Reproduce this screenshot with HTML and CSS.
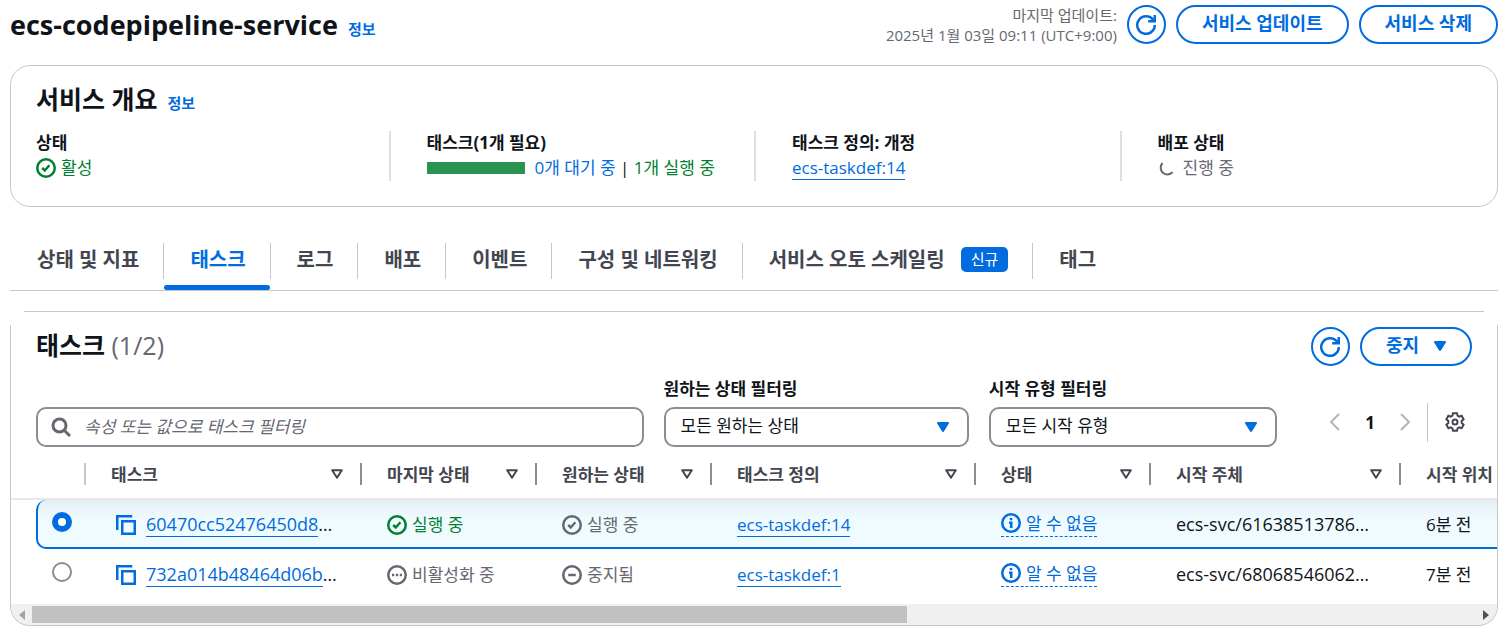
FILE: index.html
```html
<!DOCTYPE html>
<html lang="ko">
<head>
<meta charset="utf-8">
<meta name="viewport" content="width=device-width, initial-scale=1">
<title>ecs-codepipeline-service</title>
<link rel="stylesheet" href="styles.css">
</head>
<body>
<svg class="sprite" aria-hidden="true">
  <symbol id="i-refresh" viewBox="0 0 16 16"><path d="M15 8A7 7 0 1 1 13.700 4M9.700 5H15V0"/></symbol>
  <symbol id="i-check" viewBox="0 0 16 16"><circle cx="8" cy="8" r="7"/><path d="M5 8l2 2 3.7-4.2"/></symbol>
  <symbol id="i-dots" viewBox="0 0 16 16"><circle cx="8" cy="8" r="7"/><path d="M4 8h1.8M7.1 8h1.8M10.2 8H12"/></symbol>
  <symbol id="i-minus" viewBox="0 0 16 16"><circle cx="8" cy="8" r="7"/><path d="M5 8h6"/></symbol>
  <symbol id="i-info" viewBox="0 0 16 16"><circle cx="8" cy="8" r="7"/><path d="M6.4 7.7H8.2V12M8 4v1.8"/></symbol>
  <symbol id="i-copy" viewBox="0 0 16 16"><path d="M13 1H1v11M5 5h10v10H5z"/></symbol>
  <symbol id="i-down" viewBox="0 0 12 10"><path d="M1 1h10L6 9z"/></symbol>
  <symbol id="i-sort" viewBox="0 0 12 10"><path d="M1.200 1.200h9.600L6 8.800z"/></symbol>
</svg>
<main class="page">
  <header class="page-header">
    <h1 class="title">ecs-codepipeline-service</h1>
    <a class="info" href="#">정보</a>
    <p class="updated">마지막 업데이트:<br>2025년 1월 03일 09:11 (UTC+9:00)</p>
    <div class="actions">
      <button class="btn btn-round" type="button" aria-label="새로 고침"><svg class="icon"><use href="#i-refresh"/></svg></button>
      <button class="btn" type="button">서비스 업데이트</button>
      <button class="btn" type="button">서비스 삭제</button>
    </div>
  </header>

  <section class="overview">
    <div class="overview-head"><h2 class="heading">서비스 개요</h2><a class="info" href="#">정보</a></div>
    <dl class="facts">
      <div class="fact"><dt>상태</dt><dd class="status ok"><svg class="icon"><use href="#i-check"/></svg>활성</dd></div>
      <div class="fact"><dt>태스크(1개 필요)</dt><dd class="counts"><span class="bar"></span><span><span class="pending">0개 대기 중</span> | <span class="ok">1개 실행 중</span></span></dd></div>
      <div class="fact"><dt>태스크 정의: 개정</dt><dd><a class="link" href="#">ecs-taskdef:14</a></dd></div>
      <div class="fact"><dt>배포 상태</dt><dd class="status muted"><svg class="icon spinner" viewBox="0 0 20 20"><path d="M4.500 5A6.300 6.300 0 0 0 14.500 14.300"/></svg>진행 중</dd></div>
    </dl>
  </section>

  <nav class="tabs" role="tablist">
    <button class="tab" role="tab" type="button">상태 및 지표</button>
    <button class="tab active" role="tab" type="button" aria-selected="true">태스크</button>
    <button class="tab" role="tab" type="button">로그</button>
    <button class="tab" role="tab" type="button">배포</button>
    <button class="tab" role="tab" type="button">이벤트</button>
    <button class="tab" role="tab" type="button">구성 및 네트워킹</button>
    <button class="tab" role="tab" type="button">서비스 오토 스케일링<span class="badge">신규</span></button>
    <button class="tab" role="tab" type="button">태그</button>
  </nav>

  <div class="top-rule"></div>
  <section class="panel">
    <div class="panel-head">
      <h2 class="heading">태스크 <span class="count">(1/2)</span></h2>
      <div class="actions">
        <button class="btn btn-round" type="button" aria-label="새로 고침"><svg class="icon"><use href="#i-refresh"/></svg></button>
        <button class="btn" type="button">중지<svg class="caret"><use href="#i-down"/></svg></button>
      </div>
    </div>
    <div class="filters">
      <div class="field search">
        <svg class="icon" viewBox="0 0 20 20"><circle cx="8.500" cy="8.500" r="6.500"/><path d="M13.200 13.200L19 19"/></svg>
        <input class="control" type="search" aria-label="태스크 필터링" placeholder="속성 또는 값으로 태스크 필터링">
      </div>
      <div class="field">
        <label for="desired">원하는 상태 필터링</label>
        <div class="select"><select class="control" id="desired"><option>모든 원하는 상태</option></select><svg class="caret"><use href="#i-down"/></svg></div>
      </div>
      <div class="field">
        <label for="launch">시작 유형 필터링</label>
        <div class="select"><select class="control" id="launch"><option>모든 시작 유형</option></select><svg class="caret"><use href="#i-down"/></svg></div>
      </div>
      <div class="pager">
        <div class="pages">
          <button class="plain arrow" type="button" aria-label="이전 페이지"><svg class="icon" viewBox="0 0 20 20"><path d="M14 2L6 10l8 8"/></svg></button>
          <button class="plain current" type="button">1</button>
          <button class="plain arrow" type="button" aria-label="다음 페이지"><svg class="icon" viewBox="0 0 20 20"><path d="M6 2l8 8-8 8"/></svg></button>
        </div>
        <button class="plain settings" type="button" aria-label="기본 설정"><svg class="icon" viewBox="0 0 20 20"><path d="M8 1.200h4l.6 2.500 1.500.9 2.500-.8 2 3.500-1.900 1.700v2l1.900 1.700-2 3.500-2.500-.8-1.500.9-.6 2.500H8l-.6-2.500-1.500-.9-2.500.8-2-3.500L3.300 11V9L1.400 7.300l2-3.500 2.500.8 1.500-.9z"/><circle cx="10" cy="10" r="2.500"/></svg></button>
      </div>
    </div>
    <div class="table-wrap">
      <table class="tasks">
        <colgroup><col class="c-gutter"><col class="c-pick"><col class="c-task"><col class="c-state"><col class="c-state"><col class="c-def"><col class="c-state"><col class="c-by"><col class="c-state"></colgroup>
        <thead>
          <tr>
            <th class="gutter"></th>
            <th aria-label="선택"><div class="th light"></div></th>
            <th><div class="th">태스크<svg class="sort"><use href="#i-sort"/></svg></div></th>
            <th><div class="th">마지막 상태<svg class="sort"><use href="#i-sort"/></svg></div></th>
            <th><div class="th">원하는 상태<svg class="sort"><use href="#i-sort"/></svg></div></th>
            <th><div class="th">태스크 정의<svg class="sort"><use href="#i-sort"/></svg></div></th>
            <th><div class="th">상태<svg class="sort"><use href="#i-sort"/></svg></div></th>
            <th><div class="th">시작 주체<svg class="sort"><use href="#i-sort"/></svg></div></th>
            <th><div class="th">시작 위치</div></th>
          </tr>
        </thead>
        <tbody>
          <tr class="selected">
            <td class="gutter"></td>
            <td class="pick"><input class="radio" type="radio" name="task" aria-label="60470cc52476450d8" checked></td>
            <td><div class="task"><svg class="icon copy"><use href="#i-copy"/></svg><span><a class="link" href="#">60470cc52476450d8</a>…</span></div></td>
            <td><div class="status ok"><svg class="icon"><use href="#i-check"/></svg>실행 중</div></td>
            <td><div class="status muted"><svg class="icon"><use href="#i-check"/></svg>실행 중</div></td>
            <td><a class="link" href="#">ecs-taskdef:14</a></td>
            <td class="health"><button class="plain unknown" type="button"><svg class="icon"><use href="#i-info"/></svg>알 수 없음</button></td>
            <td class="by">ecs-svc/61638513786…</td>
            <td>6분 전</td>
          </tr>
          <tr>
            <td class="gutter"></td>
            <td class="pick"><input class="radio" type="radio" name="task" aria-label="732a014b48464d06b"></td>
            <td><div class="task"><svg class="icon copy"><use href="#i-copy"/></svg><span><a class="link" href="#">732a014b48464d06b</a>…</span></div></td>
            <td><div class="status muted"><svg class="icon"><use href="#i-dots"/></svg>비활성화 중</div></td>
            <td><div class="status muted"><svg class="icon"><use href="#i-minus"/></svg>중지됨</div></td>
            <td><a class="link" href="#">ecs-taskdef:1</a></td>
            <td class="health"><button class="plain unknown" type="button"><svg class="icon"><use href="#i-info"/></svg>알 수 없음</button></td>
            <td class="by">ecs-svc/68068546062…</td>
            <td>7분 전</td>
          </tr>
        </tbody>
      </table>
    </div>
    <div class="scrollbar">
      <svg class="scroll-arrow" viewBox="0 0 6 10"><path class="dim" d="M6 0v10L0 5z"/></svg>
      <div class="track"><div class="thumb"></div></div>
      <svg class="scroll-arrow" viewBox="0 0 6 10"><path d="M0 0v10l6-5z"/></svg>
    </div>
  </section>
</main>
</body>
</html>
```
FILE: styles.css
```css
:root {
  --blue: #006ce0;
  --green: #00802f;
  --text: #0f141a;
  --dark: #424650;
  --muted: #656871;
  --line: #c6c6cd;
  --control: #8c8c94;
}
* { box-sizing: border-box; }
body {
  margin: 0;
  background: #fff;
  color: var(--text);
  font: 17px/25px "Open Sans", "Noto Sans CJK KR", sans-serif;
}
h1, h2, p, dl, dd { margin: 0; }
button, input, select { font: inherit; color: inherit; }
a { color: var(--blue); text-decoration: none; }
.sprite { position: absolute; width: 0; height: 0; }
.page { padding: 5px 8px 8px 10px; }
.icon { width: 20px; height: 20px; flex: none; fill: none; stroke: currentColor; stroke-width: 2; }
.caret { width: 12px; height: 10px; fill: currentColor; stroke: currentColor; stroke-width: 2; stroke-linejoin: round; }

.page-header { display: flex; align-items: flex-start; height: 40px; }
.title { font-size: 27px; line-height: 39px; font-weight: 700; }
.info { margin-left: 10px; font-size: 15px; font-weight: 700; }
.page-header .info { padding-top: 12px; }
.updated { margin-left: auto; text-align: right; font-size: 15px; line-height: 20px; color: var(--muted); }
.actions { display: flex; gap: 10px; margin-left: 10px; }
.btn {
  display: flex; align-items: center; justify-content: center; gap: 15px;
  height: 39px; padding: 0 24px 2px;
  border: 2px solid var(--blue); border-radius: 20px;
  background: #fff; color: var(--blue); font-size: 18px; font-weight: 700; line-height: 25px;
}
.btn-round { width: 39px; padding: 0; }

.overview { margin-top: 20px; padding: 18px 12px 25px; border: 1px solid var(--line); border-radius: 20px; }
.overview-head { display: flex; align-items: baseline; padding-left: 13px; }
.heading { font-size: 25px; line-height: 31px; font-weight: 700; }
.facts { display: grid; grid-template-columns: repeat(4, 1fr); margin-top: 15px; }
.fact { padding-left: 36px; border-left: 2px solid #dedee3; }
.fact:first-child { padding-left: 13px; border-left: 0; }
.fact dt { line-height: 24px; font-weight: 700; }
.fact dd { line-height: 26px; }
.status { display: flex; align-items: center; gap: 5px; }
.counts { display: flex; align-items: center; gap: 10px; }
.bar { width: 98px; height: 12px; background: #29934f; }
.ok { color: var(--green); }
.muted { color: var(--muted); }
.pending { color: var(--blue); }
.link { border-bottom: 1px solid var(--blue); }

.tabs { display: flex; margin-top: 26px; padding-left: 1px; border-bottom: 1px solid var(--line); }
.tab {
  position: relative; display: flex; align-items: center; height: 57px; padding: 0 25px 5px 26px;
  border: 0; background: none; color: var(--dark); font-size: 20px; line-height: 25px; font-weight: 700;
}
.tab:not(:last-child)::after { content: ""; position: absolute; right: 0; top: 10px; width: 1px; height: 36px; background: var(--line); }
.tab.active { color: var(--blue); }
.tab.active::before { content: ""; position: absolute; left: 0; right: 1px; bottom: 0; height: 5px; border-radius: 3px; background: var(--blue); }
.badge { margin-left: 16px; padding: 0 10px; border-radius: 5px; background: var(--blue); color: #fff; font-size: 15px; font-weight: 400; }

.top-rule { height: 1px; margin: 20px 14px 13px; background: var(--line); }
.panel { border: 1px solid var(--line); border-top: 0; border-radius: 0 0 20px 20px; overflow: hidden; }
.panel-head { display: flex; align-items: flex-start; justify-content: space-between; padding: 2px 25px 0; }
.panel-head .heading { padding-top: 3px; }
.count { color: var(--muted); font-weight: 400; }
.filters { display: grid; grid-template-columns: 607fr 305fr 288fr 175px; gap: 20px; align-items: end; padding: 10px 25px 0; }
.field label { display: block; margin-bottom: 6px; font-weight: 700; }
.control { width: 100%; height: 40px; border: 2px solid var(--control); border-radius: 10px; background: transparent; appearance: none; outline: 0; }
.search, .select { display: grid; align-items: center; }
.search > *, .select > * { grid-area: 1 / 1; }
.search .icon { margin-left: 15px; color: var(--muted); stroke-width: 3; }
.search .control { padding: 0 15px 2px 46px; }
.search .control::placeholder { color: var(--muted); font-style: italic; opacity: 1; }
.select .control { padding: 0 40px 3px 15px; }
.select .caret { justify-self: end; margin-right: 20px; color: var(--blue); pointer-events: none; }
.plain { display: flex; align-items: center; padding: 0; border: 0; background: none; }
.pager { display: flex; align-items: center; justify-content: flex-end; gap: 12px; height: 50px; padding-right: 7px; }
.pages { display: flex; align-items: center; gap: 20px; }
.arrow { color: #b4b4bb; }
.current { font-weight: 700; }
.settings { height: 39px; padding-left: 17px; border-left: 1px solid var(--line); color: var(--dark); }

.table-wrap { overflow: hidden; }
.tasks { width: 1565px; table-layout: fixed; border-collapse: separate; border-spacing: 0; }
.c-gutter { width: 25px; }
.c-pick { width: 50px; }
.c-task { width: 276px; }
.c-state { width: 175px; }
.c-def { width: 264px; }
.c-by { width: 250px; }
.tasks th { padding: 16px 0 13px; border-bottom: 2px solid #e6e8eb; color: var(--dark); text-align: left; }
.th { display: flex; align-items: center; justify-content: space-between; height: 22px; padding: 0 17px 0 25px; border-right: 2px solid var(--control); }
.light { border-color: var(--line); }
.sort { width: 12px; height: 10px; fill: none; stroke: var(--dark); stroke-width: 2; stroke-linejoin: round; }
.tasks td { height: 49px; padding: 2px 0 0 25px; white-space: nowrap; }
.tasks .pick { padding: 0 0 4px 16px; }
.tasks .health { padding-top: 0; }
.tasks .gutter { padding: 0; }
.by, .task { font-size: 18px; }
.selected td:not(.gutter) { border-bottom: 2px solid var(--blue); background: linear-gradient(#e3eff5, #f0fbff 20px); }
.tasks .selected .pick { padding-left: 14px; border-left: 2px solid var(--blue); border-radius: 10px 0 0 10px; }
.radio { display: block; width: 20px; height: 20px; margin: 0; appearance: none; border: 2px solid var(--control); border-radius: 50%; background: #fff; }
.radio:checked { border: 6px solid var(--blue); }
.task { display: flex; align-items: center; gap: 10px; padding-left: 5px; }
.copy { color: var(--blue); }
.unknown { gap: 5px; border-bottom: 1px dashed var(--blue); color: var(--blue); }
.scrollbar { display: flex; align-items: center; height: 21px; margin-top: 6px; padding: 0 8px; background: #f0f0f0; }
.scroll-arrow { width: 6px; height: 10px; fill: #505050; }
.dim { fill: #a3a3a3; }
.track { flex: 1; margin: 0 7px; }
.thumb { width: 60.6%; height: 17px; background: #c1c1c1; }
```
